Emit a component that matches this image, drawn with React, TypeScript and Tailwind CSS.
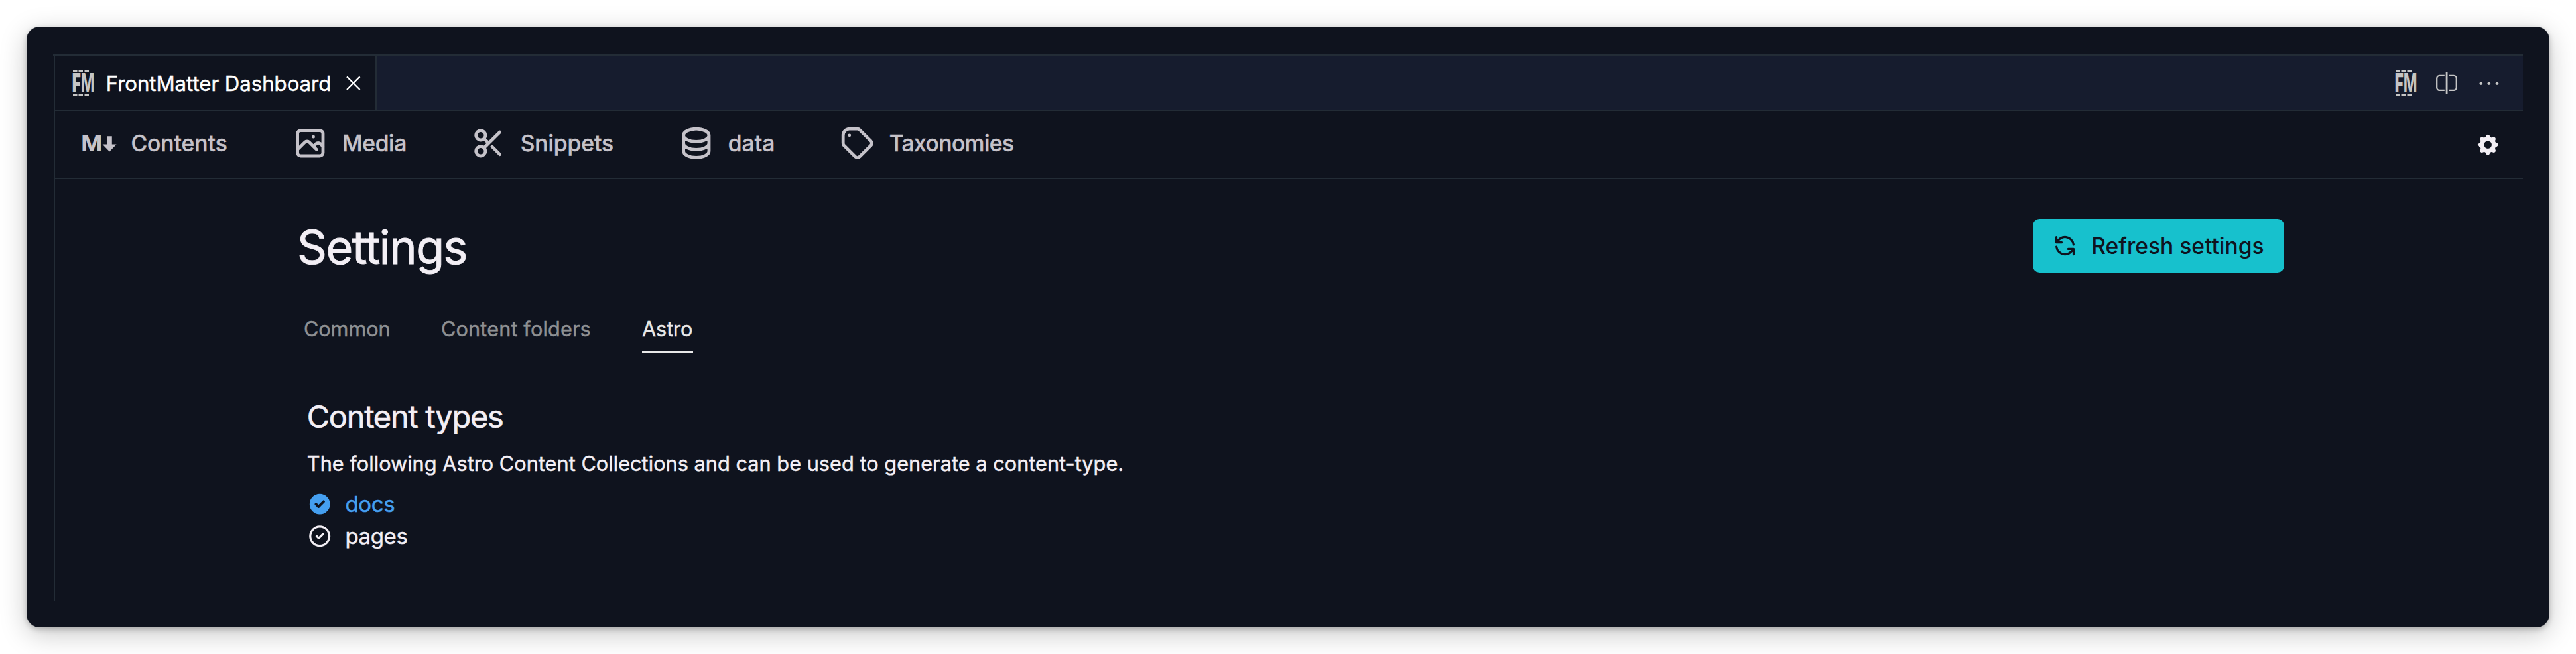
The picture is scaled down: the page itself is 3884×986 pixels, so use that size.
import React from 'react';

function FrontMatterLogo() {
  return (
    <svg width="32" height="38" viewBox="0 0 32 38" className="shrink-0 overflow-visible fill-[#c5c5c5]">
      <path d="M0 0h6.5v2H0zM8.5 0h6.5v2H8.5zM17.5 0H24v2h-6.5zM0 36h6.5v2H0zM8.5 36h6.5v2H8.5zM17.5 36H24v2h-6.5z" />
      <text
        x="-1.2"
        y="33.2"
        fontSize="39.5"
        textLength="33.8"
        lengthAdjust="spacingAndGlyphs"
        className="font-['Inter',sans-serif] font-bold"
      >
        <tspan className="font-black">F</tspan>M
      </text>
    </svg>
  );
}

function MarkdownIcon() {
  return (
    <svg width="57.6" height="57.6" viewBox="0 0 57.6 57.6" className="shrink-0 overflow-visible fill-current">
      <text
        x="1.2"
        y="41.4"
        fontSize="32.5"
        textLength="32"
        lengthAdjust="spacingAndGlyphs"
        className="font-['Inter',sans-serif] font-bold"
      >
        M
      </text>
      <path d="M40.4 18.2h7.4v12.4h6.8L44.1 41.6 33.6 30.6h6.8z" />
    </svg>
  );
}

function OutlineIcon({ d, className }: { d: string; className: string }) {
  return (
    <svg
      viewBox="0 0 24 24"
      fill="none"
      stroke="currentColor"
      strokeWidth="2"
      strokeLinecap="round"
      strokeLinejoin="round"
      className={`shrink-0 ${className}`}
    >
      <path d={d} />
    </svg>
  );
}

const navItems = [
  {
    label: 'Media',
    width: 'w-[268.7px]',
    tracking: 'tracking-[-0.35px]',
    d: 'M4 16l4.586-4.586a2 2 0 012.828 0L16 16m-2-2l1.586-1.586a2 2 0 012.828 0L20 14m-6-6h.01M6 20h12a2 2 0 002-2V6a2 2 0 00-2-2H6a2 2 0 00-2 2v12a2 2 0 002 2z',
  },
  {
    label: 'Snippets',
    width: 'w-[313.2px]',
    tracking: 'tracking-[-0.05px]',
    d: 'M14.121 14.121L19 19m-7-7l7-7m-7 7l-2.879 2.879M12 12L9.121 9.121m0 5.758a3 3 0 10-4.243 4.243 3 3 0 004.243-4.243zm0-5.758a3 3 0 10-4.243-4.243 3 3 0 004.243 4.243z',
  },
  {
    label: 'data',
    width: 'w-[242.8px]',
    tracking: 'tracking-normal',
    d: 'M4 7v10c0 2.21 3.582 4 8 4s8-1.79 8-4V7M4 7c0 2.21 3.582 4 8 4s8-1.79 8-4M4 7c0-2.21 3.582-4 8-4s8 1.79 8 4m0 5c0 2.21-3.582 4-8 4s-8-1.79-8-4',
  },
  {
    label: 'Taxonomies',
    width: 'w-[280px]',
    tracking: 'tracking-[-0.55px]',
    d: 'M7 7h.01M7 3h5c.512 0 1.024.195 1.414.586l7 7a2 2 0 010 2.828l-7 7a2 2 0 01-2.828 0l-7-7A1.994 1.994 0 013 12V7a4 4 0 014-4z',
  },
];

function TabBar() {
  return (
    <div className="flex h-[84px] border-b-2 border-[#232c36] bg-[#161c2e]">
      <div className="flex w-[485px] items-center border-r-2 border-[#232c36] bg-[#0f131e] pl-[27px]">
        <FrontMatterLogo />
        <span className="ml-[17.7px] w-[358px] whitespace-nowrap pt-px text-[31.2px] leading-[48px] tracking-[-0.05px] text-white">
          FrontMatter Dashboard
        </span>
        <svg width="30" height="30" viewBox="0 0 30 30" className="shrink-0 stroke-white" fill="none" strokeWidth="2.2">
          <path d="M5 5.4 24.6 25M24.6 5.4 5 25" />
        </svg>
      </div>
      <div className="flex flex-1 items-center justify-end pr-[36px]">
        <FrontMatterLogo />
        <svg width="32" height="36" viewBox="0 0 32 36" className="ml-[29px] shrink-0 stroke-[#c5c5c5]" fill="none" strokeWidth="2.3">
          <path d="M12.8 6.8H5.2a4 4 0 0 0-4 4v14a4 4 0 0 0 4 4h7.6M19.6 6.8h7.2a4 4 0 0 1 4 4v14a4 4 0 0 1-4 4h-7.2" />
          <path d="M16.1 1v33.8" strokeWidth="2.8" />
        </svg>
        <svg width="30" height="6" viewBox="0 0 30 6" className="ml-[33px] shrink-0 fill-[#c5c5c5]">
          <circle cx="2.8" cy="3.6" r="2.3" />
          <circle cx="14.8" cy="3.6" r="2.3" />
          <circle cx="27" cy="3.6" r="2.3" />
        </svg>
      </div>
    </div>
  );
}

function NavBar() {
  return (
    <nav className="flex h-[102px] items-center justify-between border-b-2 border-[#232c36] pl-[37.6px] pr-[33.2px] text-[#c5c2c9]">
      <div className="flex items-center pb-1 text-[33.6px] font-medium leading-[58px]">
        <div className="flex w-[318.6px] items-center gap-[19.2px]">
          <MarkdownIcon />
          <span>Contents</span>
        </div>
        {navItems.map((item) => (
          <div key={item.label} className={`flex items-center gap-[19.2px] ${item.width}`}>
            <OutlineIcon d={item.d} className="size-[57.6px]" />
            <span className={item.tracking}>{item.label}</span>
          </div>
        ))}
      </div>
      <svg viewBox="0 0 20 20" className="size-[38.4px] fill-[#f3eff5]">
        <path
          fillRule="evenodd"
          clipRule="evenodd"
          d="M11.49 3.17c-.38-1.56-2.6-1.56-2.98 0a1.532 1.532 0 01-2.286.948c-1.372-.836-2.942.734-2.106 2.106.54.886.061 2.042-.947 2.287-1.561.379-1.561 2.6 0 2.978a1.532 1.532 0 01.947 2.287c-.836 1.372.734 2.942 2.106 2.106a1.532 1.532 0 012.287.947c.379 1.561 2.6 1.561 2.978 0a1.533 1.533 0 012.287-.947c1.372.836 2.942-.734 2.106-2.106a1.533 1.533 0 01.947-2.287c1.561-.379 1.561-2.6 0-2.978a1.532 1.532 0 01-.947-2.287c.836-1.372-.734-2.942-2.106-2.106a1.532 1.532 0 01-2.287-.947zM10 13a3 3 0 100-6 3 3 0 000 6z"
        />
      </svg>
    </nav>
  );
}

export default function App() {
  return (
    <div className="h-[986px] w-[3884px] overflow-hidden bg-white p-10 font-['Inter',sans-serif] [-webkit-text-stroke:0.45px_currentColor]">
      <div className="h-[906px] rounded-[20px] bg-[#0f131e] pt-[42px] pl-10 pr-10 shadow-[0_3px_9px_rgba(0,0,0,0.22),0_10px_40px_rgba(0,0,0,0.22)]">
        <div className="border-t-2 border-[#232c36]">
          <div className="ml-px h-[822px] border-l-2 border-[#232c36]">
            <TabBar />
            <NavBar />
            <main className="pl-[364px] pr-[360px] pt-[60px] text-[#f3eff5]">
              <div className="flex h-[81px] items-center justify-between">
                <h1 className="pt-1 pl-px text-[70px] leading-[77px] tracking-[-1.5px] [-webkit-text-stroke:0.9px_currentColor]">
                  Settings
                </h1>
                <button className="flex h-[81px] w-[379px] items-center whitespace-nowrap rounded-[10px] bg-[#17c1cd] pl-[29px] text-[33.6px] font-medium text-[#0f131e] [-webkit-text-stroke:0px]">
                  <OutlineIcon
                    className="mr-[19.2px] size-[39px]"
                    d="M4 4v5h.582m15.356 2A8.001 8.001 0 004.582 9m0 0H9m11 11v-5h-.581m0 0a8.003 8.003 0 01-15.357-2m15.357 2H15"
                  />
                  <span className="pt-px pl-px">Refresh settings</span>
                </button>
              </div>
              <div className="mt-[61px] flex h-[60px] pl-[11px] text-[30.7px] leading-[48px] text-[#8e9093]">
                <div className="w-[207px] tracking-[-0.1px]">Common</div>
                <div className="w-[303px] tracking-[0.12px]">Content folders</div>
                <div className="w-[77px] border-b-[3px] border-[#e8e8e8] tracking-[-0.1px] text-[#e8e8e8]">Astro</div>
              </div>
              <section className="pl-[15.8px]">
                <h2 className="mt-[66px] text-[47px] leading-[60px] tracking-[-1.3px] [-webkit-text-stroke:0.6px_currentColor]">
                  Content types
                </h2>
                <p className="mt-[17px] text-[30.7px] leading-[48px] tracking-[0.02px]">
                  The following Astro Content Collections and can be used to generate a content-type.
                </p>
                <ul className="mt-[13px] text-[33px] leading-[48px] tracking-[-0.35px]">
                  <li className="flex h-12 items-center gap-[19.2px] text-[#459ff0]">
                    <svg viewBox="0 0 20 20" className="size-[38.4px] fill-current">
                      <path
                        fillRule="evenodd"
                        clipRule="evenodd"
                        d="M10 18a8 8 0 100-16 8 8 0 000 16zm3.707-9.293a1 1 0 00-1.414-1.414L9 10.586 7.707 9.293a1 1 0 00-1.414 1.414l2 2a1 1 0 001.414 0l4-4z"
                      />
                    </svg>
                    docs
                  </li>
                  <li className="flex h-12 items-center gap-[19.2px]">
                    <OutlineIcon className="size-[38.4px]" d="M9 12l2 2 4-4m6 2a9 9 0 11-18 0 9 9 0 0118 0z" />
                    pages
                  </li>
                </ul>
              </section>
            </main>
          </div>
        </div>
      </div>
    </div>
  );
}
